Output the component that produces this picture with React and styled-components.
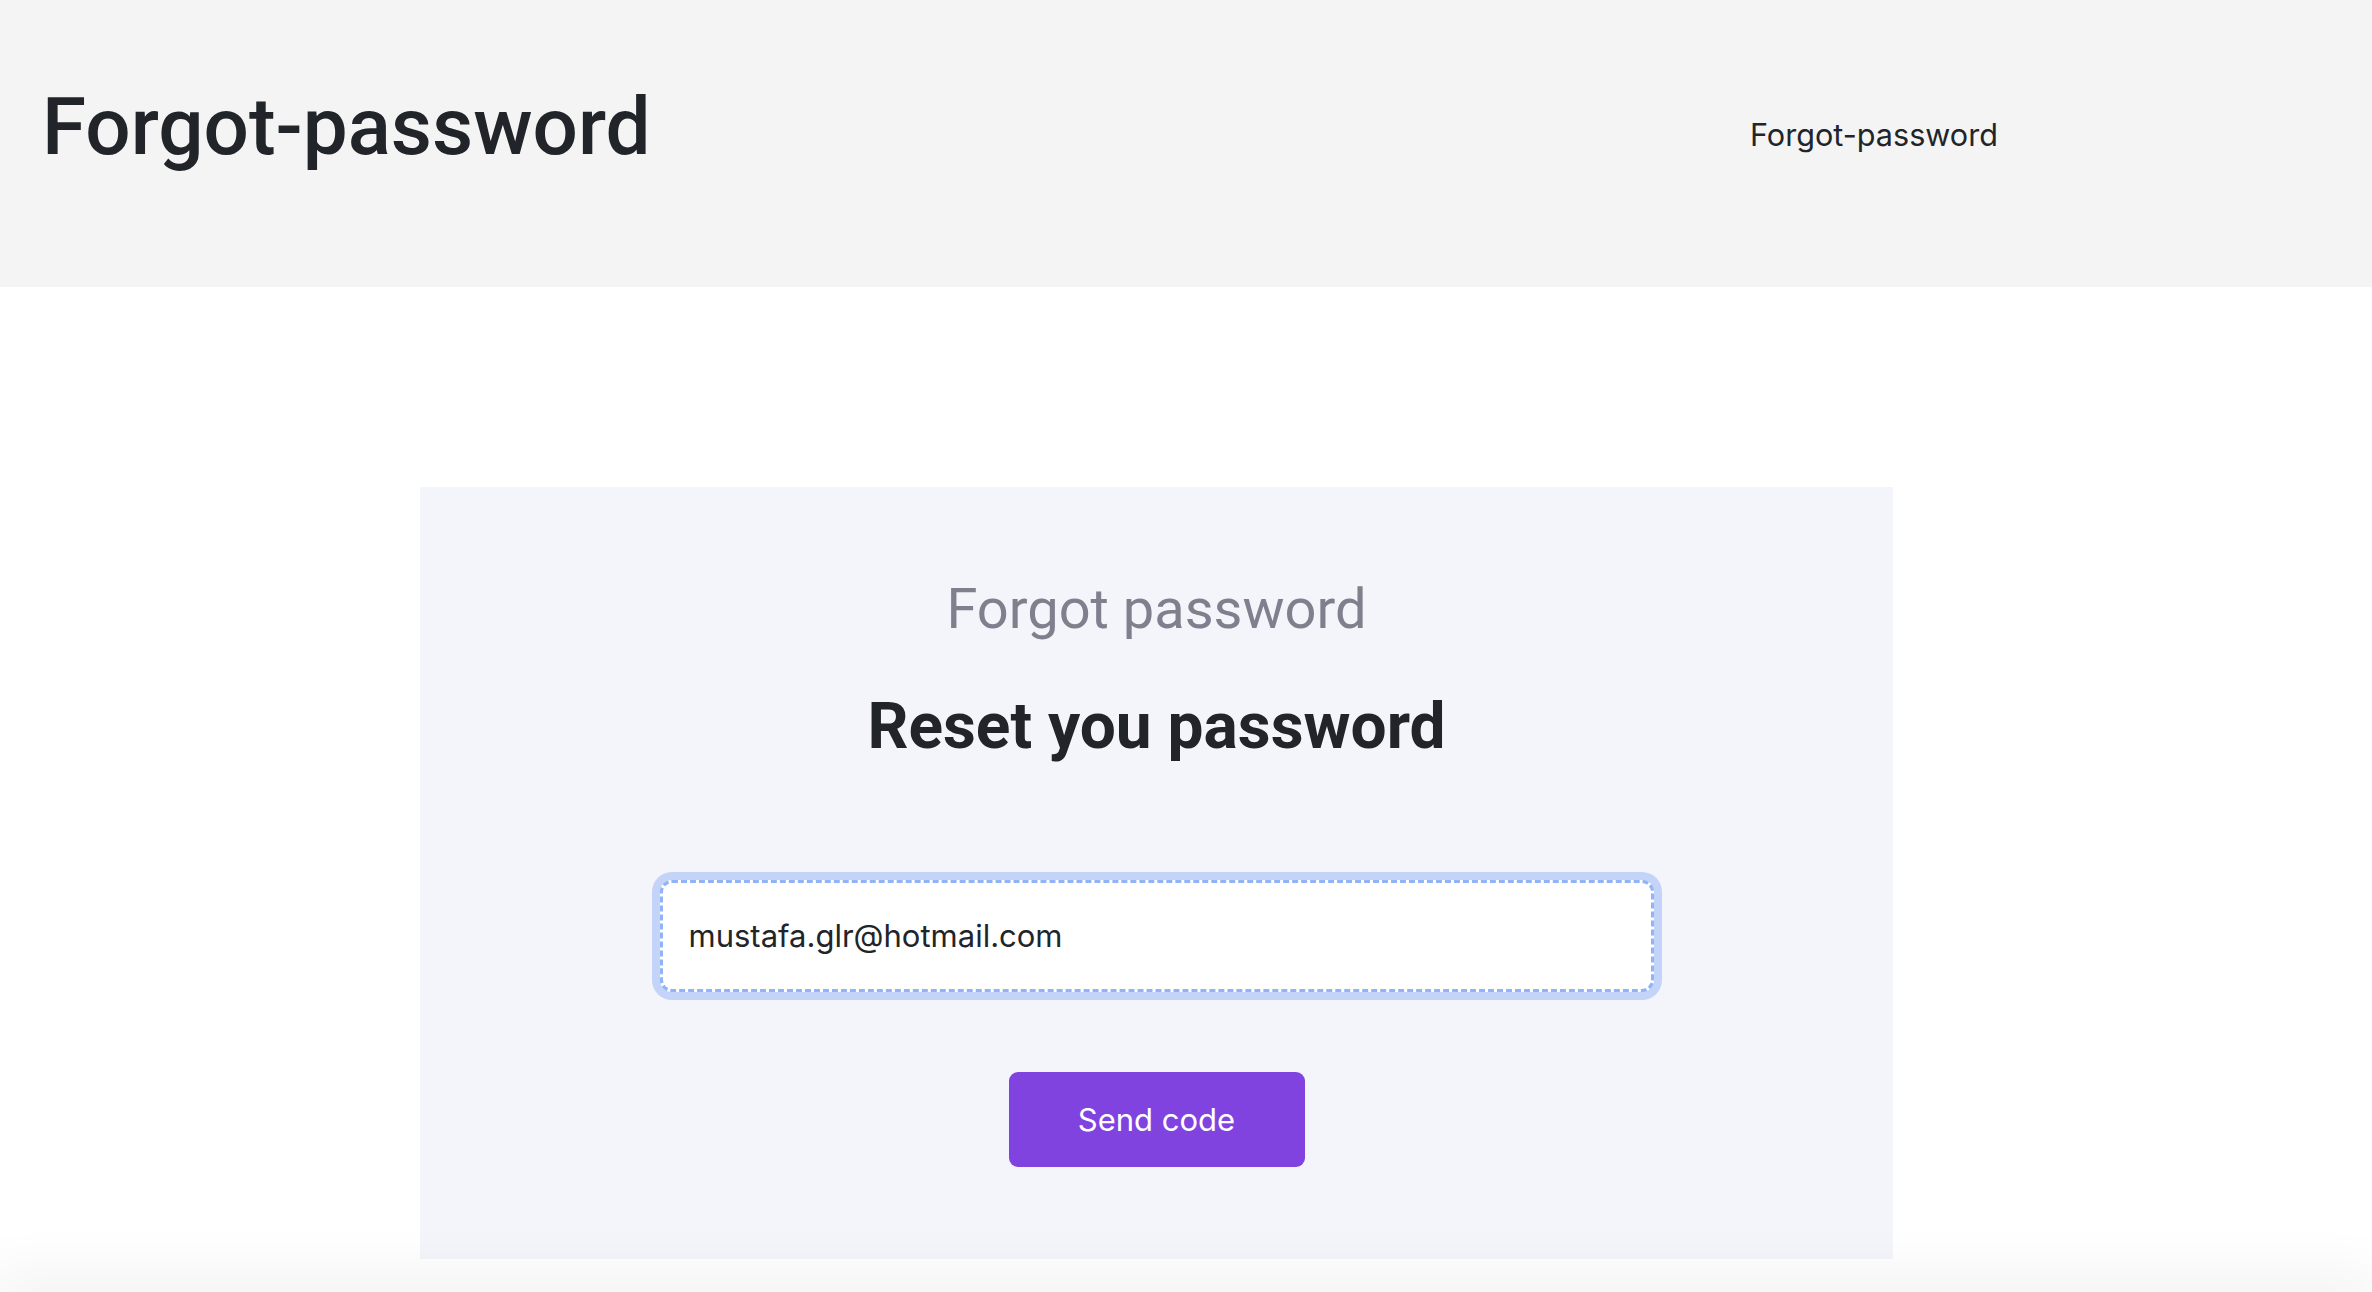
import React, { useState } from "react";
import styled, { createGlobalStyle } from "styled-components";

const GlobalStyle = createGlobalStyle`
  html, body {
    margin: 0;
    padding: 0;
    background: #ffffff;
    font-family: Roboto, "Liberation Sans", sans-serif;
    color: #212529;
  }
  * {
    box-sizing: border-box;
  }
`;

const Header = styled.header`
  display: grid;
  grid-template-columns: 1708px auto;
  align-items: start;
  height: 287px;
  padding-left: 42px;
  background-color: #f4f4f4;
`;

const PageTitle = styled.h1`
  margin: 0;
  padding-top: 79px;
  font-family: Roboto, "Liberation Sans", sans-serif;
  font-size: 80px;
  font-weight: 500;
  line-height: 1.2;
  color: #212529;
`;

const Crumb = styled.span`
  padding-top: 117px;
  font-family: Inter, "Noto Sans", sans-serif;
  font-size: 30.6px;
  line-height: 1.2;
  color: #212529;
`;

const Card = styled.main`
  display: flex;
  flex-direction: column;
  align-items: center;
  width: 1473px;
  height: 772px;
  margin: 200px 0 0 420px;
  padding-top: 89px;
  background-color: #f4f5fa;
`;

const Subtitle = styled.h4`
  margin: 0;
  font-size: 56px;
  font-weight: 400;
  line-height: 1.2;
  color: #7f7f8e;
`;

const Heading = styled.h2`
  margin: 46px 0 0;
  font-size: 64px;
  font-weight: 700;
  line-height: 1.2;
  color: #212529;
`;

const EmailInput = styled.input`
  width: 994px;
  height: 112px;
  margin-top: 114px;
  padding: 0 26px;
  border: 3px dashed #90b4f7;
  border-radius: 12px;
  outline: none;
  box-shadow: 0 0 0 8px #c3d4f8;
  background: #ffffff;
  font-family: Inter, "Noto Sans", sans-serif;
  font-size: 31px;
  color: #212529;
`;

const SendButton = styled.button`
  width: 296px;
  height: 95px;
  margin-top: 80px;
  border: none;
  border-radius: 9px;
  background-color: #8143e0;
  color: #ffffff;
  font-family: Inter, "Noto Sans", sans-serif;
  font-size: 31px;
  cursor: pointer;
`;

const BottomShade = styled.div`
  position: fixed;
  left: 0;
  right: 0;
  top: 100%;
  height: 10px;
  box-shadow: 0 0 60px 10px rgba(0, 0, 0, 0.09);
  pointer-events: none;
`;

export default function App() {
  const [email, setEmail] = useState("mustafa.glr@hotmail.com");

  return (
    <>
      <GlobalStyle />
      <Header>
        <PageTitle>Forgot-password</PageTitle>
        <Crumb>Forgot-password</Crumb>
      </Header>
      <Card>
        <Subtitle>Forgot password</Subtitle>
        <Heading>Reset you password</Heading>
        <EmailInput
          type="email"
          value={email}
          onChange={(e) => setEmail(e.target.value)}
        />
        <SendButton>Send code</SendButton>
      </Card>
      <BottomShade />
    </>
  );
}
